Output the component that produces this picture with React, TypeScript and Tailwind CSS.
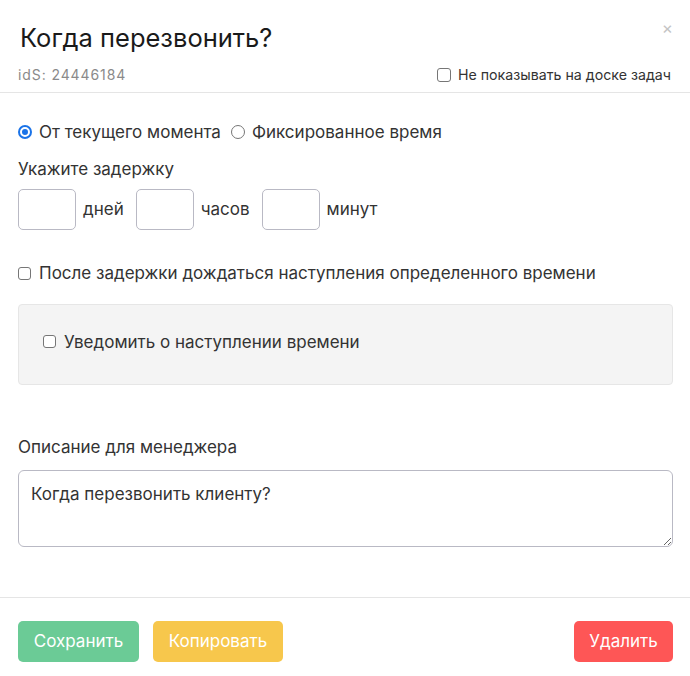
import { useState } from "react";

const font = { fontFamily: "Inter, 'Noto Sans', sans-serif" };

function Checkbox({ className = "" }: { className?: string }) {
  return (
    <span
      className={`inline-block h-[13px] w-[13px] shrink-0 rounded-[3px] border border-[#767676] bg-white ${className}`}
    />
  );
}

function Radio({ checked }: { checked?: boolean }) {
  return checked ? (
    <span className="flex h-[14px] w-[14px] shrink-0 items-center justify-center rounded-full bg-[#1a73e8]">
      <span className="h-[10px] w-[10px] rounded-full border-2 border-white bg-[#1a73e8]" />
    </span>
  ) : (
    <span className="inline-block h-[14px] w-[14px] shrink-0 rounded-full border border-[#767676] bg-white" />
  );
}

function DelayInput({ label }: { label: string }) {
  return (
    <div className="flex items-center">
      <input
        className="h-[41px] w-[58px] rounded-[5px] border border-[#b9b9c4] bg-white px-2 outline-none"
        type="text"
      />
      <span className="ml-[7px] text-[17px] text-[#333]">{label}</span>
    </div>
  );
}

export default function App() {
  const [description, setDescription] = useState("Когда перезвонить клиенту?");

  return (
    <div className="h-[676px] w-[690px] bg-white text-[#333]" style={font}>
      <header className="relative border-b border-[#e5e5e5] px-[18px] pb-[7px] pt-[22px]">
        <h1 className="pl-[2px] text-[25.5px] leading-[32px] text-[#1a1a1a]">
          Когда перезвонить?
        </h1>
        <span className="absolute right-[17px] top-[20px] text-[17px] leading-none text-[#c4c4c4]">
          ×
        </span>
        <div className="mt-[10px] flex items-center justify-between">
          <span className="text-[14px] tracking-[0.9px] text-[#8a8a8a]">idS: 24446184</span>
          <label className="flex items-center gap-[7px] pr-[1px] text-[14.2px] text-[#333]">
            <Checkbox className="h-[14px] w-[14px]" />
            Не показывать на доске задач
          </label>
        </div>
      </header>

      <main className="px-[18px] pt-[28px]">
        <div className="flex items-center text-[17px] leading-[22px]">
          <label className="flex items-center gap-[7px]">
            <Radio checked />
            От текущего момента
          </label>
          <label className="ml-[10px] flex items-center gap-[7px]">
            <Radio />
            Фиксированное время
          </label>
        </div>

        <p className="mt-[15px] text-[17px] leading-[22px]">Укажите задержку</p>
        <div className="mt-[9px] flex items-center gap-[12px]">
          <DelayInput label="дней" />
          <DelayInput label="часов" />
          <DelayInput label="минут" />
        </div>

        <label className="mt-[32px] flex items-center gap-[8px] text-[17px] leading-[22px]">
          <Checkbox />
          После задержки дождаться наступления определенного времени
        </label>

        <div className="mr-[-1px] mt-[20px] flex h-[81px] items-center rounded-[4px] border border-[#e6e6e6] bg-[#f4f4f4] px-[24px] pb-[6px]">
          <label className="flex items-center gap-[8px] text-[17px] leading-[22px]">
            <Checkbox />
            Уведомить о наступлении времени
          </label>
        </div>

        <p className="mt-[51px] text-[17px] leading-[22px]">Описание для менеджера</p>
        <textarea
          className="mr-[-1px] mt-[12px] block h-[77px] w-[calc(100%+1px)] resize-y rounded-[6px] border border-[#b9b9c4] px-[12px] py-[12px] text-[17px] leading-[22px] text-[#333] outline-none"
          value={description}
          onChange={(e) => setDescription(e.target.value)}
        />
      </main>

      <footer className="mt-[50px] flex items-center justify-between border-t border-[#e5e5e5] pl-[18px] pr-[17px] pt-[23px]">
        <div className="flex gap-[14px]">
          <button className="h-[41px] w-[121px] rounded-[5px] bg-[#6bcb96] text-[17px] text-white">
            Сохранить
          </button>
          <button className="h-[41px] w-[130px] rounded-[5px] bg-[#f7c74c] text-[17px] text-white">
            Копировать
          </button>
        </div>
        <button className="h-[41px] w-[99px] rounded-[5px] bg-[#fe5656] text-[17px] text-white">
          Удалить
        </button>
      </footer>
    </div>
  );
}
